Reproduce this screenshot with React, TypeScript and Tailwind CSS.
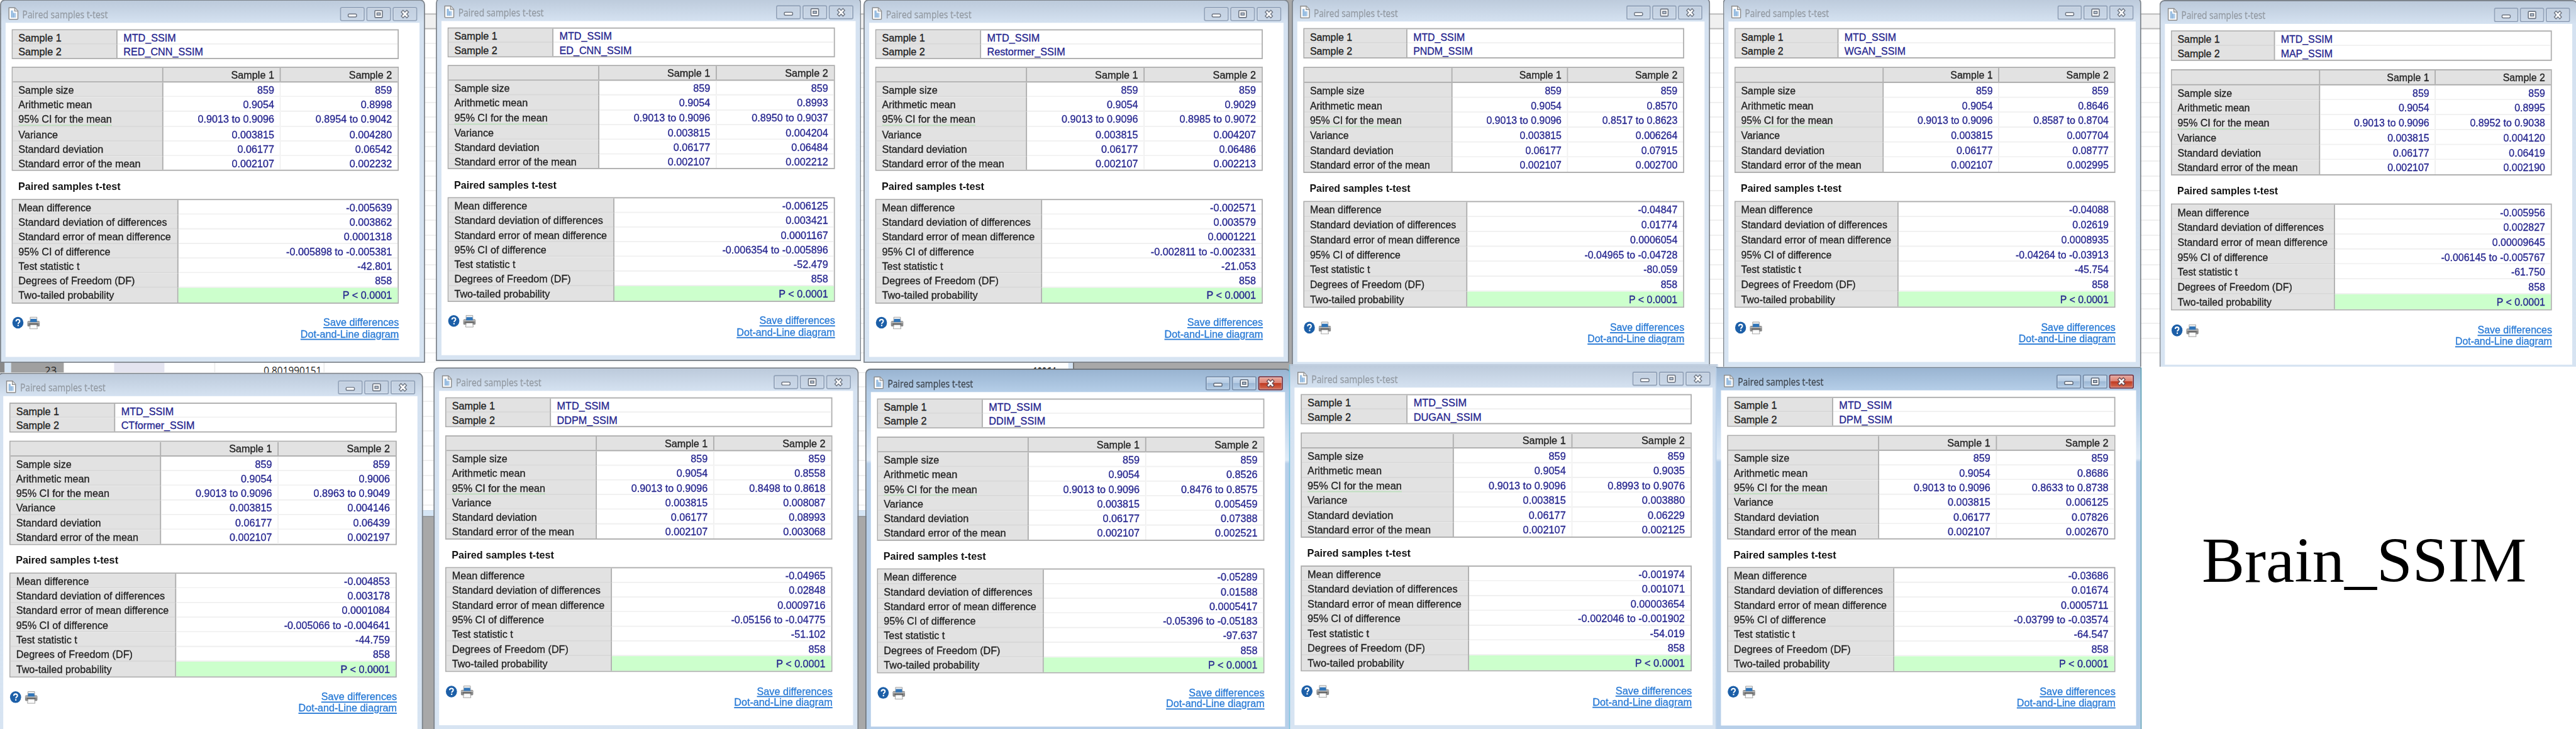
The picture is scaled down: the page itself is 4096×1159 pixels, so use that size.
import React from "react";

type Win = {
  name: string;
  // left, right, top and bottom of the window's block of tables on the desktop
  box: [number, number, number, number];
  mean: string;
  ci: string;
  variance: string;
  sd: string;
  se: string;
  diff: string;
  sdDiff: string;
  seDiff: string;
  ciDiff: string;
  t: string;
  active?: boolean;
  flatEdge?: boolean;
};

const windows: Win[] = [
  { name: "RED_CNN_SSIM", box: [19.8, 681.9, 49.8, 518.8], mean: "0.8998", ci: "0.8954 to 0.9042", variance: "0.004280", sd: "0.06542", se: "0.002232", diff: "-0.005639", sdDiff: "0.003862", seDiff: "0.0001318", ciDiff: "-0.005898 to -0.005381", t: "-42.801" },
  { name: "ED_CNN_SSIM", box: [764.4, 1427, 46.9, 515.9], mean: "0.8993", ci: "0.8950 to 0.9037", variance: "0.004204", sd: "0.06484", se: "0.002212", diff: "-0.006125", sdDiff: "0.003421", seDiff: "0.0001167", ciDiff: "-0.006354 to -0.005896", t: "-52.479" },
  { name: "Restormer_SSIM", box: [1496.3, 2159.2, 49.8, 518.8], mean: "0.9029", ci: "0.8985 to 0.9072", variance: "0.004207", sd: "0.06486", se: "0.002213", diff: "-0.002571", sdDiff: "0.003579", seDiff: "0.0001221", ciDiff: "-0.002811 to -0.002331", t: "-21.053" },
  { name: "PNDM_SSIM", box: [2227.6, 2879.1, 48.2, 526.1], mean: "0.8570", ci: "0.8517 to 0.8623", variance: "0.006264", sd: "0.07915", se: "0.002700", diff: "-0.04847", sdDiff: "0.01774", seDiff: "0.0006054", ciDiff: "-0.04965 to -0.04728", t: "-80.059" },
  { name: "WGAN_SSIM", box: [2964.9, 3616.4, 48.2, 526.1], mean: "0.8646", ci: "0.8587 to 0.8704", variance: "0.007704", sd: "0.08777", se: "0.002995", diff: "-0.04088", sdDiff: "0.02619", seDiff: "0.0008935", ciDiff: "-0.04264 to -0.03913", t: "-45.754" },
  { name: "MAP_SSIM", box: [3710.1, 4361.7, 51.8, 530.2], mean: "0.8995", ci: "0.8952 to 0.9038", variance: "0.004120", sd: "0.06419", se: "0.002190", diff: "-0.005956", sdDiff: "0.002827", seDiff: "0.00009645", ciDiff: "-0.006145 to -0.005767", t: "-61.750" },
  { name: "CTformer_SSIM", box: [16, 678.6, 687.9, 1157.7], mean: "0.9006", ci: "0.8963 to 0.9049", variance: "0.004146", sd: "0.06439", se: "0.002197", diff: "-0.004853", sdDiff: "0.003178", seDiff: "0.0001084", ciDiff: "-0.005066 to -0.004641", t: "-44.759" },
  { name: "DDPM_SSIM", box: [761, 1423.2, 679, 1148.3], mean: "0.8558", ci: "0.8498 to 0.8618", variance: "0.008087", sd: "0.08993", se: "0.003068", diff: "-0.04965", sdDiff: "0.02848", seDiff: "0.0009716", ciDiff: "-0.05156 to -0.04775", t: "-51.102" },
  { name: "DDIM_SSIM", box: [1498.8, 2161.4, 681.2, 1150.8], mean: "0.8526", ci: "0.8476 to 0.8575", variance: "0.005459", sd: "0.07388", se: "0.002521", diff: "-0.05289", sdDiff: "0.01588", seDiff: "0.0005417", ciDiff: "-0.05396 to -0.05183", t: "-97.637", active: true },
  { name: "DUGAN_SSIM", box: [2222.8, 2891.7, 673.7, 1147.5], mean: "0.9035", ci: "0.8993 to 0.9076", variance: "0.003880", sd: "0.06229", se: "0.002125", diff: "-0.001974", sdDiff: "0.001071", seDiff: "0.00003654", ciDiff: "-0.002046 to -0.001902", t: "-54.019", flatEdge: true },
  { name: "DPM_SSIM", box: [2951.5, 3615.6, 678.2, 1148.7], mean: "0.8686", ci: "0.8633 to 0.8738", variance: "0.006125", sd: "0.07826", se: "0.002670", diff: "-0.03686", sdDiff: "0.01674", seDiff: "0.0005711", ciDiff: "-0.03799 to -0.03574", t: "-64.547", active: true, flatEdge: true },
];

const TABLE_W = 692.6;
const TABLE_H = 469;
const TABLE_X = 20.7;
const TABLE_Y = 51.1;

function frameBorder(w: Win) {
  if (w.active && w.flatEdge) return "rounded-t-[3px] border-[#b7cfe9] border-t-[#6f7f90] border-r-[#3a8ba3] ";
  if (w.active) return "rounded-t-[9px] border-[#6f7780] border-r-[#4fb3d6] ";
  if (w.flatEdge) return "rounded-t-[3px] border-[#cfdeee] border-l-[#7cc4e0] border-t-[#bccadb] ";
  return "rounded-t-[9px] border-[#7d848c] ";
}

function DocIcon() {
  return (
    <svg viewBox="0 0 20 22" className="h-[22px] w-[20px] shrink-0">
      <path d="M2 1.2h10.5L18 6.8V20a1 1 0 0 1-1 1H3a1 1 0 0 1-1-1z" fill="#fdfdfd" stroke="#8b8b8b" strokeWidth="1.6" />
      <path d="M12.2 1.5v5.6H18" fill="#e4e4e4" stroke="#8b8b8b" strokeWidth="1.3" />
      <path d="M5.5 6h4v4h5v8h-9z" fill="#a9c9e8" />
      <path d="M7 6v12M10 10v8" stroke="#7fabd6" strokeWidth="1" />
    </svg>
  );
}

function CaptionButton({ kind, active }: { kind: "min" | "max" | "close"; active?: boolean }) {
  const skin = !active
    ? "border-[#94a4ba] bg-linear-to-b from-[#c3d0e0] to-[#c9d7e8]"
    : kind === "close"
      ? "border-[#7d3540] bg-[linear-gradient(#eaa79c_0%,#dc8273_48%,#bf3a22_50%,#d46a50_100%)]"
      : "border-[#7a90ac] bg-[linear-gradient(#c9daed_0%,#b6cce4_48%,#9cb7d5_50%,#b3cce6_100%)]";
  const ink = active ? (kind === "close" ? "#6b4a50" : "#5d6878") : "#6d7582";
  return (
    <div className={"flex h-[24px] w-[44px] items-center justify-center rounded-[3px] border-2 shadow-[inset_0_0_0_1px_rgba(255,255,255,0.4)] " + skin}>
      <svg viewBox="0 0 20 16" className="h-[16px] w-[20px]">
        {kind === "min" && <rect x="2.5" y="8" width="15" height="5" rx="2" fill="#fff" stroke={ink} strokeWidth="1.6" />}
        {kind === "max" && (
          <>
            <rect x="3.2" y="2" width="13.6" height="12" rx="1.5" fill="#fff" stroke={ink} strokeWidth="1.8" />
            <rect x="7" y="6" width="6" height="3.8" fill="#b9c8da" stroke={ink} strokeWidth="1.6" />
          </>
        )}
        {kind === "close" && (
          <>
            <path d="M4.5 2.5l11 11M15.5 2.5l-11 11" stroke={ink} strokeWidth="6" />
            <path d="M5.6 3.6l8.8 8.8M14.4 3.6l-8.8 8.8" stroke="#fff" strokeWidth="3" />
          </>
        )}
      </svg>
    </div>
  );
}

function HelpIcon() {
  return (
    <svg viewBox="0 0 22 22" className="h-[21px] w-[22px]">
      <circle cx="11" cy="11" r="10.4" fill="#1c5fa8" />
      <path d="M7.6 8.6c0-2 1.5-3.2 3.5-3.2s3.4 1.2 3.4 2.9c0 2.3-3 2.4-3 4.8" fill="none" stroke="#fff" strokeWidth="2.3" />
      <rect x="10.2" y="14.7" width="2.5" height="2.4" fill="#fff" />
    </svg>
  );
}

function PrinterIcon() {
  return (
    <svg viewBox="0 0 24 22" className="h-[22px] w-[24px]">
      <path d="M6 1h12v6H6z" fill="#efefef" stroke="#9a9a9a" strokeWidth="1" />
      <path d="M6.5 4h11v5h-11z" fill="#2f74b8" />
      <rect x="1" y="7.5" width="22" height="9.5" rx="2" fill="#8a8a8a" />
      <rect x="1" y="9" width="22" height="2" fill="#b9b9b9" />
      <rect x="6" y="7" width="12" height="2.4" fill="#2f74b8" />
      <rect x="4.5" y="12" width="15" height="2" fill="#5a5a5a" />
      <path d="M6.2 14h11.6l1 7H5.2z" fill="#fafafa" stroke="#9a9a9a" strokeWidth="1" />
    </svg>
  );
}

function StatRow({ label, a, b, dotted, last }: { label: string; a: string; b: string; dotted?: boolean; last?: boolean }) {
  return (
    <div className="flex h-[25.15px] leading-[26px]">
      <div className={"w-[269px] shrink-0 border-r-2 border-r-[#adadad] bg-[#e2e2e2] pl-[10.3px] text-[#222] " + (last ? "" : "shadow-[inset_0_-2px_0_#d8d8d8]")}>
        <span className={dotted ? "inline-block h-[24px] border-b-2 border-[#bfe0bf]" : ""}>{label}</span>
      </div>
      <div className={"w-[210.5px] shrink-0 border-r-2 border-[#f0f0f0] pr-[10px] text-right " + (last ? "" : "shadow-[inset_0_-2px_0_#f0f0f0]")}>{a}</div>
      <div className={"flex-1 pr-[10.5px] text-right " + (last ? "" : "shadow-[inset_0_-2px_0_#f0f0f0]")}>{b}</div>
    </div>
  );
}

function TestRow({ label, value, green }: { label: string; value: string; green?: boolean }) {
  return (
    <div className="flex h-[25.05px] leading-[26px]">
      <div className={"w-[296.5px] shrink-0 border-r-2 border-r-[#adadad] bg-[#e2e2e2] pl-[10.3px] text-[#222] " + (green ? "" : "shadow-[inset_0_-2px_0_#d8d8d8]")}>{label}</div>
      <div className={"flex-1 pr-[10.5px] text-right " + (green ? "bg-[#ccffcc]" : "shadow-[inset_0_-2px_0_#f0f0f0]")}>{value}</div>
    </div>
  );
}

function ResultWindow({ w }: { w: Win }) {
  const [l, r, t, b] = w.box;
  const sx = (r - l) / TABLE_W;
  const sy = (b - t) / TABLE_H;
  return (
    <div
      className={
        "absolute box-border flex h-[621px] w-[760px] origin-top-left flex-col overflow-hidden border-2 px-[8px] pb-[8px] " +
        frameBorder(w) +
        (w.active
          ? "bg-[linear-gradient(#99b4d1_0px,#b5cee8_38px,#bcd3eb_70px,#e0ebf7_154px,#b7cfe9_160px,#b7cfe9_100%)]"
          : "bg-[linear-gradient(#bccadb_0px,#d5e2f1_38px,#d7e4f2_100%)]")
      }
      style={{ left: l - TABLE_X * sx, top: t - TABLE_Y * sy, transform: `scale(${sx}, ${sy})` }}
    >
      <div className="flex h-[38px] shrink-0 items-start pt-[11px] pl-[3.5px] pr-[4px]">
        <DocIcon />
        <div className={"ml-[6px] h-[24px] w-[300px] font-['Open_Sans','Noto_Sans',sans-serif] text-[17.5px] leading-[24px] [-webkit-text-stroke:0.3px] " + (w.active ? "text-[#3d444d]" : "text-[#9299a1]")}>
          <span className="inline-block origin-left scale-x-[0.89] whitespace-nowrap">Paired samples t-test</span>
        </div>
        <div className="ml-auto flex gap-[3px]">
          <CaptionButton kind="min" active={w.active} />
          <CaptionButton kind="max" active={w.active} />
          <CaptionButton kind="close" active={w.active} />
        </div>
      </div>

      <div className="flex flex-1 flex-col bg-white pt-[11px] pl-[10.7px] font-['Liberation_Sans',Arial,sans-serif] text-[18.2px] text-[#26268f] [-webkit-text-stroke:0.35px]">
        <div className="h-[51px] w-[692.6px] border-2 border-[#adadad] leading-[26px]">
          <div className="flex h-[24px]">
            <div className="w-[187px] border-r-2 border-r-[#adadad] bg-[#e2e2e2] pl-[10.3px] text-[#222] shadow-[inset_0_-2px_0_#d8d8d8]">Sample 1</div>
            <div className="flex-1 pl-[11px] shadow-[inset_0_-2px_0_#f0f0f0]">MTD_SSIM</div>
          </div>
          <div className="flex h-[23px]">
            <div className="w-[187px] border-r-2 border-r-[#adadad] bg-[#e2e2e2] pl-[10.3px] text-[#222]">Sample 2</div>
            <div className="flex-1 pl-[11px]">{w.name}</div>
          </div>
        </div>

        <div className="mt-[13.5px] h-[178px] w-[692.6px] border-2 border-[#adadad]">
          <div className="flex h-[25px] border-b-2 border-[#adadad] bg-[#e2e2e2] leading-[25px] text-[#222]">
            <div className="w-[269px] border-r-2 border-[#adadad]" />
            <div className="w-[210.5px] border-r-2 border-[#adadad] pr-[10px] text-right">Sample 1</div>
            <div className="flex-1 pr-[10.5px] text-right">Sample 2</div>
          </div>
          <div className="h-[149px] overflow-hidden">
            <StatRow label="Sample size" a="859" b="859" />
            <StatRow label="Arithmetic mean" a="0.9054" b={w.mean} />
            <StatRow label="95% CI for the mean" a="0.9013 to 0.9096" b={w.ci} dotted />
            <StatRow label="Variance" a="0.003815" b={w.variance} />
            <StatRow label="Standard deviation" a="0.06177" b={w.sd} />
            <StatRow label="Standard error of the mean" a="0.002107" b={w.se} last />
          </div>
        </div>

        <div className="flex h-[47.5px] items-center pt-[7px] pl-[11.8px] font-bold text-[#111] [-webkit-text-stroke:0px]">Paired samples t-test</div>

        <div className="h-[179px] w-[692.6px] border-2 border-[#adadad]">
          <TestRow label="Mean difference" value={w.diff} />
          <TestRow label="Standard deviation of differences" value={w.sdDiff} />
          <TestRow label="Standard error of mean difference" value={w.seDiff} />
          <TestRow label="95% CI of difference" value={w.ciDiff} />
          <TestRow label="Test statistic t" value={w.t} />
          <TestRow label="Degrees of Freedom (DF)" value="858" />
          <TestRow label="Two-tailed probability" value="P < 0.0001" green />
        </div>

        <div className="flex w-[692.6px] justify-between pt-[22.5px]">
          <div className="flex gap-[5px]">
            <HelpIcon />
            <PrinterIcon />
          </div>
          <div className="pt-[1px] text-right leading-[19.6px] text-[#2a7bd6] underline decoration-2 underline-offset-2">
            <div>Save differences</div>
            <div>Dot-and-Line diagram</div>
          </div>
        </div>
      </div>
    </div>
  );
}

function SheetGrid() {
  return (
    <>
      <div className="h-[25px] border-b-2 border-[#b5b5b5] bg-white" />
      <div className="h-[25px] border-b-2 border-[#b5b5b5] bg-[#f0f0f0]" />
      <div className="flex-1 bg-[repeating-linear-gradient(white_0px,white_23px,#efefef_23px,#efefef_25.2px)]" />
    </>
  );
}

export default function App() {
  return (
    <div className="h-[1159px] w-[4096px] overflow-hidden bg-white">
      <div className="relative flex h-[1246px] w-[4403px] origin-top-left scale-[0.93026] overflow-hidden bg-[#a8a8a8]">
        <div className="flex w-[1836px] flex-col">
          <div className="flex h-[619px] flex-col">
            <SheetGrid />
          </div>
          <div className="flex h-[18px] overflow-hidden bg-white font-['Open_Sans','Noto_Sans',sans-serif] text-[18px] leading-[29px] text-[#222]">
            <div className="w-[8px] bg-[#8a8a8a]" />
            <div className="w-[11px] bg-[#d5e5f5]" />
            <div className="w-[90px] bg-[#a0a0a0] pr-[12px] text-right">23</div>
            <div className="w-[86px]" />
            <div className="w-[86px] bg-[#e4e4f0]" />
            <div className="w-[87px] border-r-2 border-[#ececec]" />
            <div className="w-[187px] border-r-2 border-[#ececec] pr-[3px] text-right">
              <span className="inline-block origin-right scale-x-[0.92]">0.801990151</span>
            </div>
            <div className="w-[1210px]" />
            <div className="w-[61px] pt-[1px]">
              <span className="inline-block origin-left scale-x-[0.78] font-bold">10064</span>
            </div>
            <div className="w-[8px] bg-[#d5e5f5]" />
            <div className="w-[2px] bg-[#6a6a6a]" />
          </div>
          <div className="h-[235px] bg-[repeating-linear-gradient(white_0px,white_23px,#efefef_23px,#efefef_25.2px)]" />
          <div className="h-[12px] border-b-2 border-[#8a8a8a] bg-[#d5e5f5]" />
        </div>
        <div className="w-[374px]" />
        <div className="flex flex-1 flex-col">
          <SheetGrid />
        </div>

        {windows.slice(0, 6).map((w) => (
          <ResultWindow key={w.name} w={w} />
        ))}

        {/* title panel beneath the last column, with a thin gap under the top row */}
        <div className="absolute top-[626.5px] right-0 h-[620px] w-[2195px] bg-white" />
        <div className="absolute top-[626.5px] left-[3661px] flex h-[620px] w-[742px] items-center justify-center bg-white pl-[18px] font-['Liberation_Serif','Times_New_Roman',serif] text-[109.8px] text-black">
          <span className="pt-[41px]">Brain_SSIM</span>
        </div>

        {windows.slice(6).map((w) => (
          <ResultWindow key={w.name} w={w} />
        ))}
      </div>
    </div>
  );
}
